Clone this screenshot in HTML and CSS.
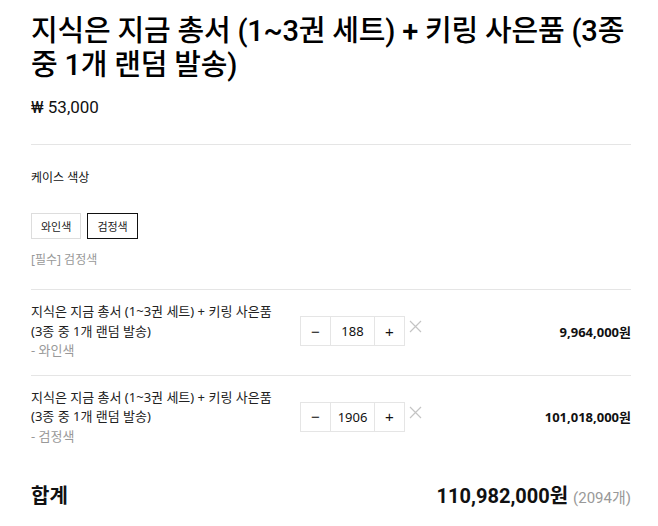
FILE: index.html
```html
<!DOCTYPE html>
<html lang="ko">

<head>
    <meta charset="UTF-8">
    <meta name="viewport" content="width=device-width, initial-scale=1.0">
    <title>지식은 지금 총서</title>
    <link rel="stylesheet" href="styles.css">
</head>

<body>
    <div class="product">
        <h1 class="title">지식은 지금 총서 (1~3권 세트) + 키링 사은품 (3종 중 1개 랜덤 발송)</h1>
        <p class="price">₩ 53,000</p>

        <!-- Option: case colour -->
        <div class="option">
            <p class="option-label">케이스 색상</p>
            <div class="option-buttons">
                <button class="opt">와인색</button>
                <button class="opt selected">검정색</button>
            </div>
            <p class="option-note">[필수] 검정색</p>
        </div>

        <!-- Selected items -->
        <ul class="items">
            <li class="item">
                <div class="item-name">
                    지식은 지금 총서 (1~3권 세트) + 키링 사은품<br>(3종 중 1개 랜덤 발송)
                    <span class="item-opt">- 와인색</span>
                </div>
                <div class="qty">
                    <button class="qty-btn">&minus;</button>
                    <span class="qty-val">188</span>
                    <button class="qty-btn">+</button>
                </div>
                <button class="remove">
                    <svg width="13" height="13" viewBox="0 0 13 13"><path d="M1 1L12 12M12 1L1 12" stroke="#c4c4c4" stroke-width="1.2"/></svg>
                </button>
                <div class="item-price">9,964,000원</div>
            </li>
            <li class="item">
                <div class="item-name">
                    지식은 지금 총서 (1~3권 세트) + 키링 사은품<br>(3종 중 1개 랜덤 발송)
                    <span class="item-opt">- 검정색</span>
                </div>
                <div class="qty">
                    <button class="qty-btn">&minus;</button>
                    <span class="qty-val">1906</span>
                    <button class="qty-btn">+</button>
                </div>
                <button class="remove">
                    <svg width="13" height="13" viewBox="0 0 13 13"><path d="M1 1L12 12M12 1L1 12" stroke="#c4c4c4" stroke-width="1.2"/></svg>
                </button>
                <div class="item-price">101,018,000원</div>
            </li>
        </ul>

        <div class="total">
            <span class="total-label">합계</span>
            <span class="total-sum">110,982,000원 <span class="total-count">(2094개)</span></span>
        </div>
    </div>
</body>

</html>
```

FILE: styles.css
```css
body {
    margin: 0;
    background: #fff;
    color: #111;
    font-family: 'Noto Sans', 'Noto Sans CJK KR', sans-serif;
}

.product {
    width: 600px;
    padding: 14px 27px 0 31px;
}

.title {
    margin: 0;
    font-family: 'Roboto', 'Noto Sans CJK KR', sans-serif;
    font-size: 29px;
    font-weight: 500;
    line-height: 34px;
    letter-spacing: -0.2px;
    color: #000;
}

.price {
    margin: 15px 0 0;
    font-family: 'Roboto', 'Noto Sans CJK KR', sans-serif;
    font-size: 17px;
    line-height: 20px;
    padding-bottom: 27px;
    border-bottom: 1px solid #e5e5e5;
}

.option {
    padding: 24px 0 20px;
}

.option-label {
    margin: 0;
    font-size: 12px;
    line-height: 18px;
}

.option-buttons {
    display: flex;
    gap: 6px;
    margin-top: 26px;
}

.opt {
    height: 26px;
    padding: 0 9px;
    background: #fff;
    border: 1px solid #ddd;
    font-family: 'Noto Sans', 'Noto Sans CJK KR', sans-serif;
    font-size: 11px;
    color: #222;
}

.opt.selected {
    border-color: #111;
}

.option-note {
    margin: 12px 0 0;
    font-size: 12px;
    line-height: 18px;
    color: #999;
}

.items {
    list-style: none;
    margin: 0;
    padding: 0;
}

.item {
    display: flex;
    align-items: center;
    border-top: 1px solid #e5e5e5;
    padding: 12px 0 14px;
}

.item-name {
    width: 269px;
    font-size: 13px;
    line-height: 19.5px;
    color: #222;
}

.item-opt {
    display: block;
    color: #999;
}

.qty {
    display: flex;
    height: 28px;
    border: 1px solid #e5e5e5;
}

.qty-btn {
    width: 29px;
    border: 0;
    background: #fff;
    font-size: 15px;
    color: #111;
    padding: 0;
}

.qty-val {
    width: 43px;
    border-left: 1px solid #e5e5e5;
    border-right: 1px solid #e5e5e5;
    text-align: center;
    line-height: 28px;
    font-size: 13px;
}

.remove {
    align-self: flex-start;
    margin: 18px 0 0 3px;
    padding: 0;
    border: 0;
    background: none;
    width: 14px;
    height: 14px;
}

.item-price {
    margin-left: auto;
    font-size: 13px;
    font-weight: 700;
    color: #111;
}

.total {
    display: flex;
    justify-content: space-between;
    align-items: baseline;
    padding-top: 20px;
}

.total-label {
    font-family: 'Roboto', 'Noto Sans CJK KR', sans-serif;
    font-size: 20px;
    font-weight: 700;
}

.total-sum {
    font-family: 'Roboto', 'Noto Sans CJK KR', sans-serif;
    font-size: 20px;
    font-weight: 700;
}

.total-count {
    font-size: 15px;
    font-weight: 400;
    color: #999;
}
```
